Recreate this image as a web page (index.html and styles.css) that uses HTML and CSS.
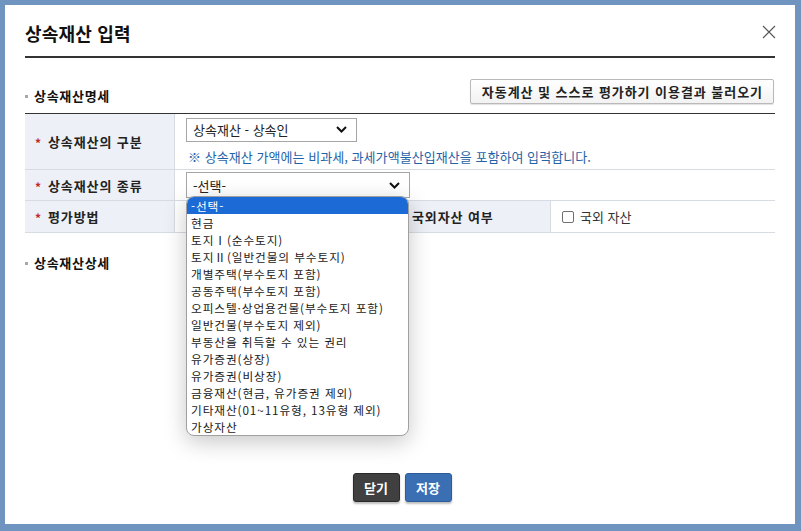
FILE: index.html
```html
<!DOCTYPE html>
<html lang="ko">
<head>
<meta charset="utf-8">
<title>상속재산 입력</title>
<link rel="stylesheet" href="styles.css">
</head>
<body>
<div class="modal">
  <header class="modal-head">
    <h1 class="modal-title">상속재산 입력</h1>
    <button class="close-btn" aria-label="닫기">
      <svg width="14" height="14" viewBox="0 0 14 14"><path d="M1 1L13 13M13 1L1 13" stroke="#555" stroke-width="1.1" fill="none"/></svg>
    </button>
  </header>
  <div class="modal-body">
    <div class="sec-head">
      <h2 class="sec-title">상속재산명세</h2>
      <button class="btn-load">자동계산 및 스스로 평가하기 이용결과 불러오기</button>
    </div>
    <div class="form-table">
      <div class="th"><span class="req">*</span>상속재산의 구분</div>
      <div class="td span3 stack">
        <div class="select sel-short"><span>상속재산 - 상속인</span>
          <svg class="chev" width="11" height="7" viewBox="0 0 11 7"><path d="M1 1L5.5 5.5L10 1" stroke="#111" stroke-width="2" fill="none"/></svg>
        </div>
        <p class="note">※ 상속재산 가액에는 비과세, 과세가액불산입재산을 포함하여 입력합니다.</p>
      </div>
      <div class="th"><span class="req">*</span>상속재산의 종류</div>
      <div class="td span3 anchor">
        <div class="select sel-long"><span>-선택-</span>
          <svg class="chev" width="11" height="7" viewBox="0 0 11 7"><path d="M1 1L5.5 5.5L10 1" stroke="#111" stroke-width="2" fill="none"/></svg>
        </div>
        <ul class="dropdown">
          <li class="on">-선택-</li>
          <li>현금</li>
          <li>토지Ⅰ(순수토지)</li>
          <li>토지Ⅱ(일반건물의 부수토지)</li>
          <li>개별주택(부수토지 포함)</li>
          <li>공동주택(부수토지 포함)</li>
          <li>오피스텔·상업용건물(부수토지 포함)</li>
          <li>일반건물(부수토지 제외)</li>
          <li>부동산을 취득할 수 있는 권리</li>
          <li>유가증권(상장)</li>
          <li>유가증권(비상장)</li>
          <li>금융재산(현금, 유가증권 제외)</li>
          <li>기타재산(01~11유형, 13유형 제외)</li>
          <li>가상자산</li>
        </ul>
      </div>
      <div class="th"><span class="req">*</span>평가방법</div>
      <div class="td"></div>
      <div class="th th-plain">국외자산 여부</div>
      <div class="td">
        <label class="check"><span class="box"></span>국외 자산</label>
      </div>
    </div>
    <h2 class="sec-title sec2">상속재산상세</h2>
  </div>
  <footer class="modal-foot">
    <button class="btn btn-dark">닫기</button>
    <button class="btn btn-blue">저장</button>
  </footer>
</div>
</body>
</html>
```

FILE: styles.css
```css
* { box-sizing: border-box; }
html, body { margin: 0; padding: 0; }
body {
  background: #7094c0;
  font-family: "Noto Sans CJK KR", "Noto Sans", sans-serif;
  color: #222;
  width: 801px;
  height: 531px;
  overflow: hidden;
}
.modal {
  margin: 5px 6px 0 5px;
  width: 790px;
  height: 519px;
  background: #fff;
  display: flex;
  flex-direction: column;
  padding: 0 20px;
}
.modal-head {
  display: flex;
  justify-content: space-between;
  align-items: center;
  padding: 16px 0 11px;
  border-bottom: 2px solid #333;
}
.modal-title {
  margin: 0;
  font-size: 18px;
  line-height: 24px;
  font-weight: 700;
  color: #111;
  letter-spacing: 0.2px;
}
.close-btn {
  border: 0;
  background: none;
  padding: 0;
  width: 14px;
  height: 14px;
  margin-right: -1px;
  margin-top: -2px;
  display: flex;
}
.modal-body { flex: 1; }
.sec-head {
  display: flex;
  justify-content: space-between;
  align-items: flex-end;
  margin-top: 21px;
  margin-bottom: 9px;
}
.sec-title {
  margin: 0;
  font-size: 13px;
  line-height: 16px;
  font-weight: 700;
  color: #111;
  display: flex;
  align-items: center;
  letter-spacing: 0.7px;
}
.sec-title::before {
  content: "";
  width: 3px;
  height: 3px;
  background: #a8a8a8;
  margin-right: 6px;
}
.btn-load {
  height: 25px;
  padding: 0 10px 0 11px;
  border: 1px solid #b9b9b9;
  border-radius: 2px;
  background: linear-gradient(#ffffff, #f2f2f2);
  box-shadow: 0 1px 1px rgba(0,0,0,0.12);
  font-family: inherit;
  font-size: 13px;
  font-weight: 700;
  color: #222;
  letter-spacing: 0.95px;
  margin-right: 1px;
}
.form-table {
  border-top: 1px solid #333;
  display: grid;
  grid-template-columns: 150px 226px 150px 1fr;
  grid-template-rows: 56px 31px 32px;
}
.th, .td {
  border-bottom: 1px solid #d7dce3;
  display: flex;
  align-items: center;
}
.th {
  background: #edf0f6;
  border-right: 1px solid #d7dce3;
  padding-left: 10px;
  font-size: 13px;
  font-weight: 700;
  color: #222;
  letter-spacing: 0.9px;
}
.th-plain { padding-left: 11px; }
.req {
  color: #c2272d;
  font-size: 12px;
  width: 13px;
  margin-right: 0;
  position: relative;
  top: 1px;
}
.td { padding-left: 11px; }
.span3 { grid-column: span 3; }
.stack {
  flex-direction: column;
  align-items: flex-start;
  justify-content: center;
  padding-bottom: 1px;
}
.select {
  border: 1px solid #a6a6a6;
  background: #fff;
  display: flex;
  align-items: center;
  justify-content: space-between;
  padding: 0 9px 0 6px;
  font-size: 13px;
  color: #222;
}
.sel-short { width: 171px; height: 24px; }
.sel-long { width: 224px; height: 26px; }
.note {
  margin: 6px 0 0 2px;
  font-size: 13px;
  line-height: 17px;
  color: #1f63a8;
  letter-spacing: 0.05px;
}
.anchor { position: relative; }
.dropdown {
  position: absolute;
  left: 11px;
  top: 26px;
  width: 223px;
  margin: 0;
  padding: 0;
  list-style: none;
  background: #fff;
  border: 1px solid #a0a0a0;
  border-radius: 8px;
  overflow: hidden;
  box-shadow: 0 6px 22px rgba(0,0,0,0.22);
  z-index: 5;
}
.dropdown li {
  height: 17px;
  line-height: 17px;
  padding-left: 4px;
  font-size: 11.7px;
  letter-spacing: 0.9px;
  color: #1a1a1a;
  white-space: nowrap;
}
.dropdown li.on {
  background: #1c6ad6;
  color: #fff;
}
.check {
  display: flex;
  align-items: center;
  font-size: 13px;
  color: #333;
  padding-left: 0;
}
.box {
  width: 12px;
  height: 12px;
  border: 1px solid #6f6f6f;
  border-radius: 2px;
  margin-right: 6px;
  background: #fff;
}
.sec2 { margin-top: 22px; }
.modal-foot {
  display: flex;
  justify-content: center;
  gap: 5px;
  padding-bottom: 22px;
  padding-left: 4px;
}
.btn {
  height: 29px;
  width: 47px;
  border-radius: 3px;
  font-family: inherit;
  font-size: 13px;
  font-weight: 700;
  color: #fff;
  padding: 0;
  box-shadow: 0 2px 2px rgba(0,0,0,0.25);
}
.btn-dark { background: #404040; border: 1px solid #2a2a2a; }
.btn-blue { background: #3b6fb4; border: 1px solid #2e5c9a; }
```
